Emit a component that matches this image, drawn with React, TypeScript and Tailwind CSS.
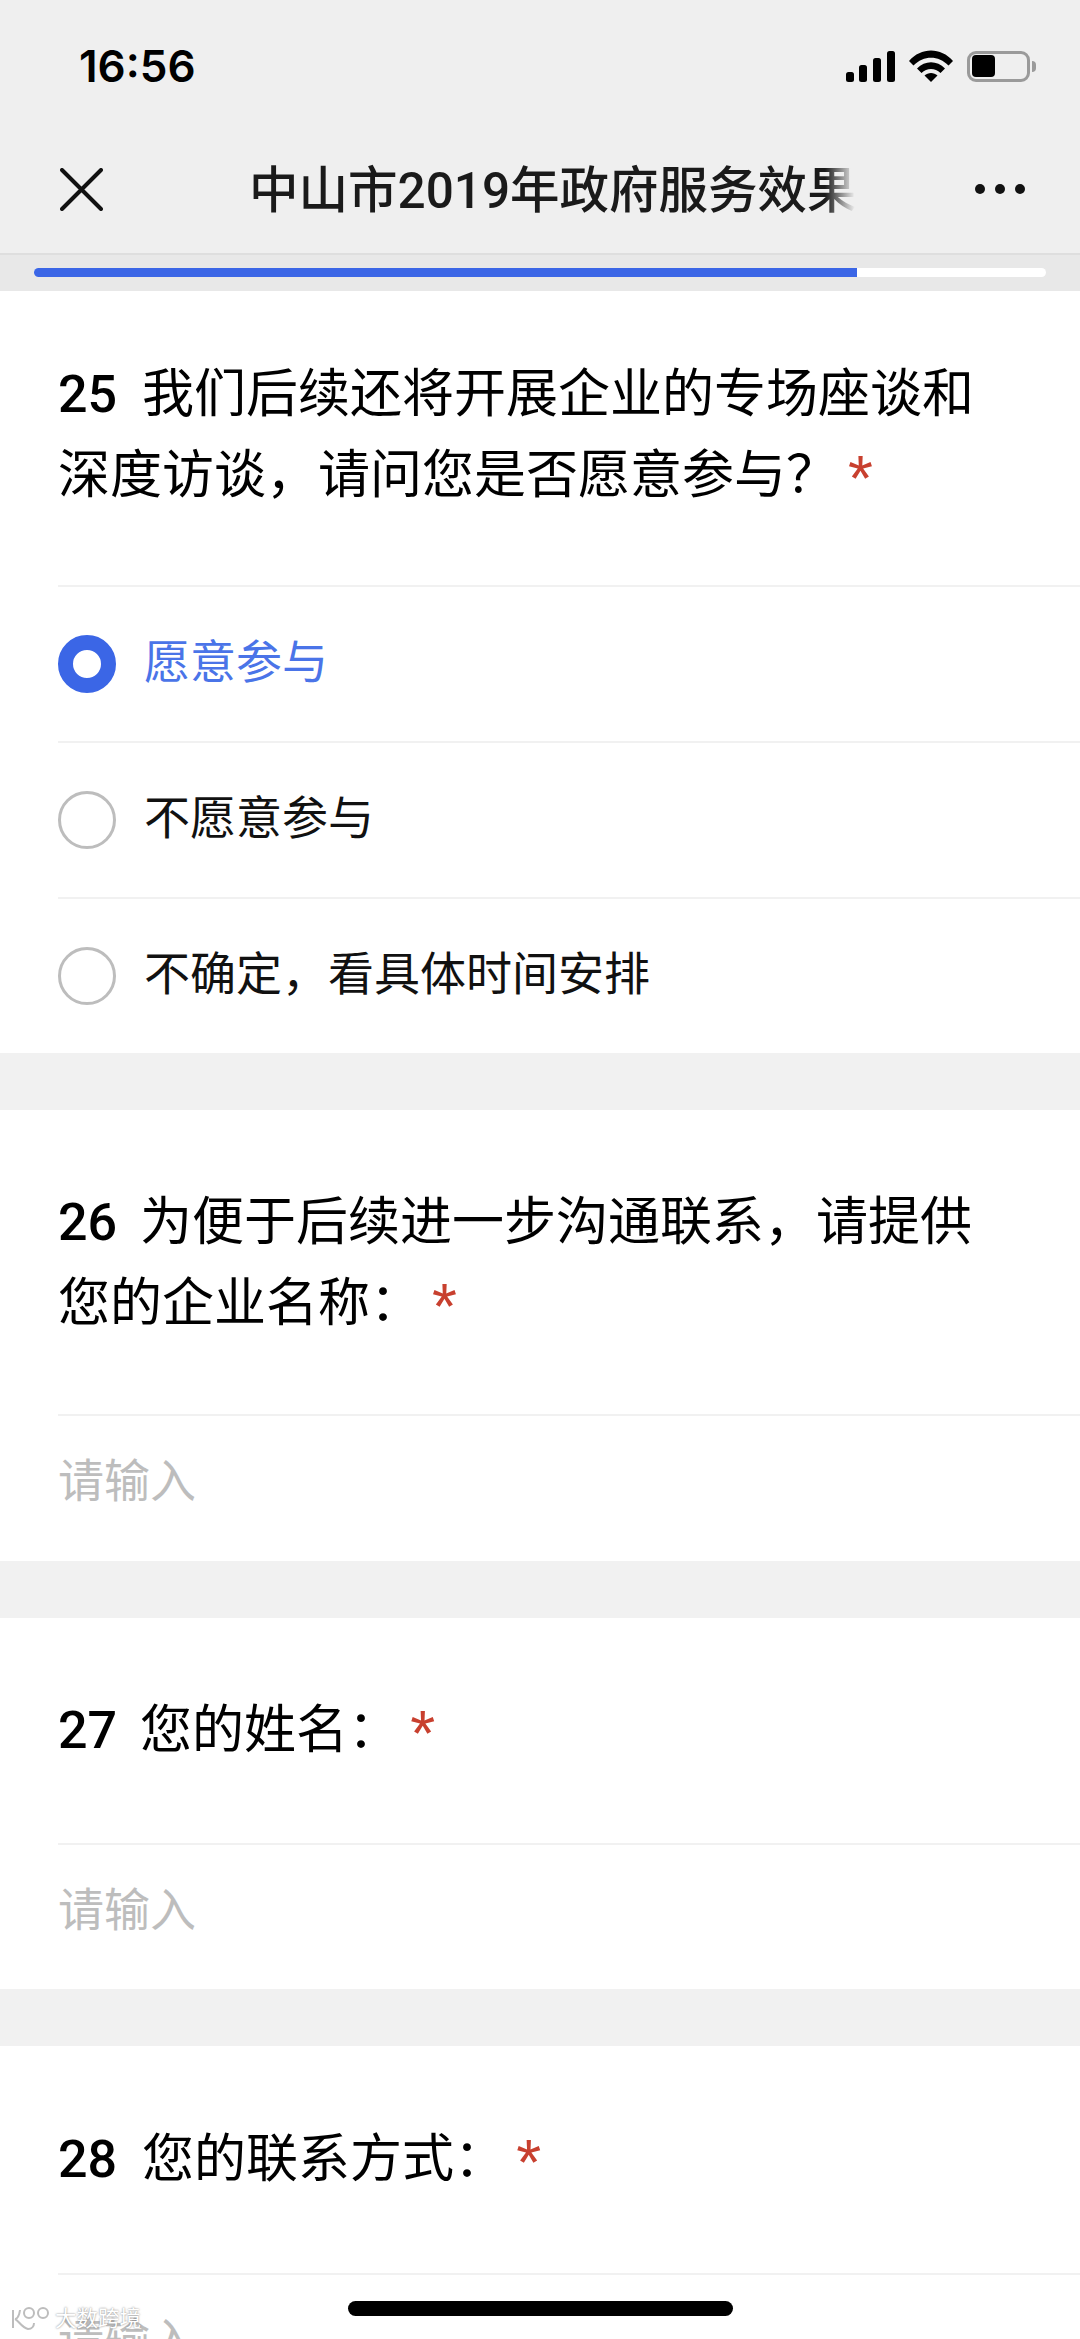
const cjk = "font-['Liberation_Sans','Noto_Sans_CJK_SC',sans-serif]";

function SignalIcon() {
  return (
    <svg width="49" height="31" viewBox="0 0 49 31" fill="#000">
      <rect x="0" y="21" width="8" height="10" rx="2.5" />
      <rect x="13" y="14" width="8" height="17" rx="2.5" />
      <rect x="27" y="7" width="8" height="24" rx="2.5" />
      <rect x="41" y="0" width="8" height="31" rx="2.5" />
    </svg>
  );
}

function WifiIcon() {
  return (
    <svg width="44" height="32" viewBox="0 0 44 32" fill="#000">
      <path d="M0 11 C12 -3 32 -3 44 11 L39.5 15.5 C29.5 5 14.5 5 4.5 15.5 Z" />
      <path d="M8 18.5 C16 10 28 10 36 18.5 L31.5 23 C26 17.5 18 17.5 12.5 23 Z" />
      <path d="M15.5 25.5 C19 22 25 22 28.5 25.5 L22 32 Z" />
    </svg>
  );
}

function BatteryIcon() {
  return (
    <div className="flex items-center">
      <div className="flex h-[31px] w-[63px] items-center rounded-[9px] border-[3px] border-[#9a9a9a] pl-[2px]">
        <div className="h-[22px] w-[23px] rounded-[4px] bg-black" />
      </div>
      <div className="ml-[2px] h-[11px] w-[4px] rounded-r-full bg-[#9a9a9a]" />
    </div>
  );
}

function Divider() {
  return <div className="ml-[58px] h-[2px] bg-[#f1f1f1]" />;
}

function Question({ num, text, pt, pb, numGap, starGap }: { num: string; text: string; pt: string; pb: string; numGap: string; starGap: string }) {
  return (
    <div className={`pl-[58px] pr-[100px] text-[52px] leading-[80px] text-black ${pt} ${pb}`}>
      <span className="font-['Roboto'] font-medium">{num}</span>
      <span className={numGap}>{text}</span>
      <span className={`${starGap} inline-block translate-y-[8px] text-[64px] leading-[40px] text-[#c8402f]`}>*</span>
    </div>
  );
}

function Option({ label, selected }: { label: string; selected?: boolean }) {
  return (
    <div className="flex h-[154px] items-center pl-[58px]">
      {selected ? (
        <div className="h-[58px] w-[58px] rounded-full border-[15px] border-[#3b66e6] bg-white" />
      ) : (
        <div className="h-[58px] w-[58px] rounded-full border-[3px] border-[#bdbdbd] bg-white" />
      )}
      <span className={`mb-[3px] ml-[28px] text-[46px] ${selected ? 'text-[#4a74e8]' : 'text-[#111]'}`}>{label}</span>
    </div>
  );
}

function Placeholder({ height }: { height: string }) {
  return <div className={`pl-[58px] pt-[41px] text-[46px] leading-[48px] text-[#bdbdbd] ${height}`}>请输入</div>;
}

export default function App() {
  return (
    <div className={`relative h-[2339px] w-[1080px] overflow-hidden bg-[#f1f1f1] ${cjk}`}>
      <div className="h-[253px] bg-[#efefef]">
        <div className="flex h-[132px] items-center justify-between pl-[79px] pr-[44px]">
          <span className="font-['Inter'] text-[44px] font-semibold text-black">16:56</span>
          <div className="flex items-center gap-[14px]">
            <SignalIcon />
            <WifiIcon />
            <BatteryIcon />
          </div>
        </div>
        <div className="flex h-[121px] items-start pt-[36px] pl-[60px] pr-[55px]">
          <svg width="43" height="43" viewBox="0 0 43 43" stroke="#111" strokeWidth="4" strokeLinecap="round">
            <path d="M2 2 L41 41 M41 2 L2 41" />
          </svg>
          <div className="relative ml-[146px] mt-[-7px] w-[606px] overflow-hidden whitespace-nowrap font-['Roboto','Noto_Sans_CJK_SC',sans-serif] text-[49.5px] font-medium leading-[60px] text-[#1a1a1a]">
            中山市2019年政府服务效果评估调查
            <div className="absolute inset-y-0 right-0 w-[30px] bg-gradient-to-l from-[#efefef] to-transparent" />
          </div>
          <div className="ml-auto mt-[16px] flex gap-[10px]">
            <div className="h-[10px] w-[10px] rounded-full bg-[#111]" />
            <div className="h-[10px] w-[10px] rounded-full bg-[#111]" />
            <div className="h-[10px] w-[10px] rounded-full bg-[#111]" />
          </div>
        </div>
      </div>

      <div className="h-[38px] border-t-2 border-[#dedede] bg-[#e8e8e8] px-[34px] pt-[13px]">
        <div className="h-[9px] overflow-hidden rounded-full bg-white">
          <div className="h-full w-[823px] bg-[#3b66e6]" />
        </div>
      </div>

      <div className="bg-white">
        <Question num="25" text="我们后续还将开展企业的专场座谈和深度访谈，请问您是否愿意参与？" pt="pt-[63px]" pb="pb-[70px]" numGap="ml-[25px]" starGap="ml-[10px]" />
        <Divider />
        <Option label="愿意参与" selected />
        <Divider />
        <Option label="不愿意参与" />
        <Divider />
        <Option label="不确定，看具体时间安排" />
      </div>

      <div className="mt-[57px] bg-white">
        <Question num="26" text="为便于后续进一步沟通联系，请提供您的企业名称：" pt="pt-[72px]" pb="pb-[71px]" numGap="ml-[23px]" starGap="ml-[10px]" />
        <Divider />
        <Placeholder height="h-[145px]" />
      </div>

      <div className="mt-[57px] bg-white">
        <Question num="27" text="您的姓名：" pt="pt-[72px]" pb="pb-[72px]" numGap="ml-[23px]" starGap="ml-[10px]" />
        <Divider />
        <Placeholder height="h-[144px]" />
      </div>

      <div className="mt-[57px] bg-white">
        <Question num="28" text="您的联系方式：" pt="pt-[73px]" pb="pb-[73px]" numGap="ml-[25px]" starGap="ml-[10px]" />
        <Divider />
        <Placeholder height="h-[142px]" />
      </div>

      <div className="absolute left-[348px] top-[2301px] h-[15px] w-[385px] rounded-full bg-black" />
      <div className="absolute left-[10px] top-[2306px] flex items-center">
        <svg width="42" height="26" viewBox="0 0 42 26" fill="none" stroke="#bdbdbd" strokeWidth="2">
          <path d="M3 4 L3 22 M10 4 C9 12 6 13 5 13 C8 14 12 22 18 23 C22 23 24 20 24 17" />
          <circle cx="19" cy="7" r="5" />
          <circle cx="33" cy="7" r="5" />
        </svg>
        <span className="ml-[3px] text-[21.5px] leading-[26px] text-white [text-shadow:0_0_2px_#777]">大数跨境</span>
      </div>
    </div>
  );
}
